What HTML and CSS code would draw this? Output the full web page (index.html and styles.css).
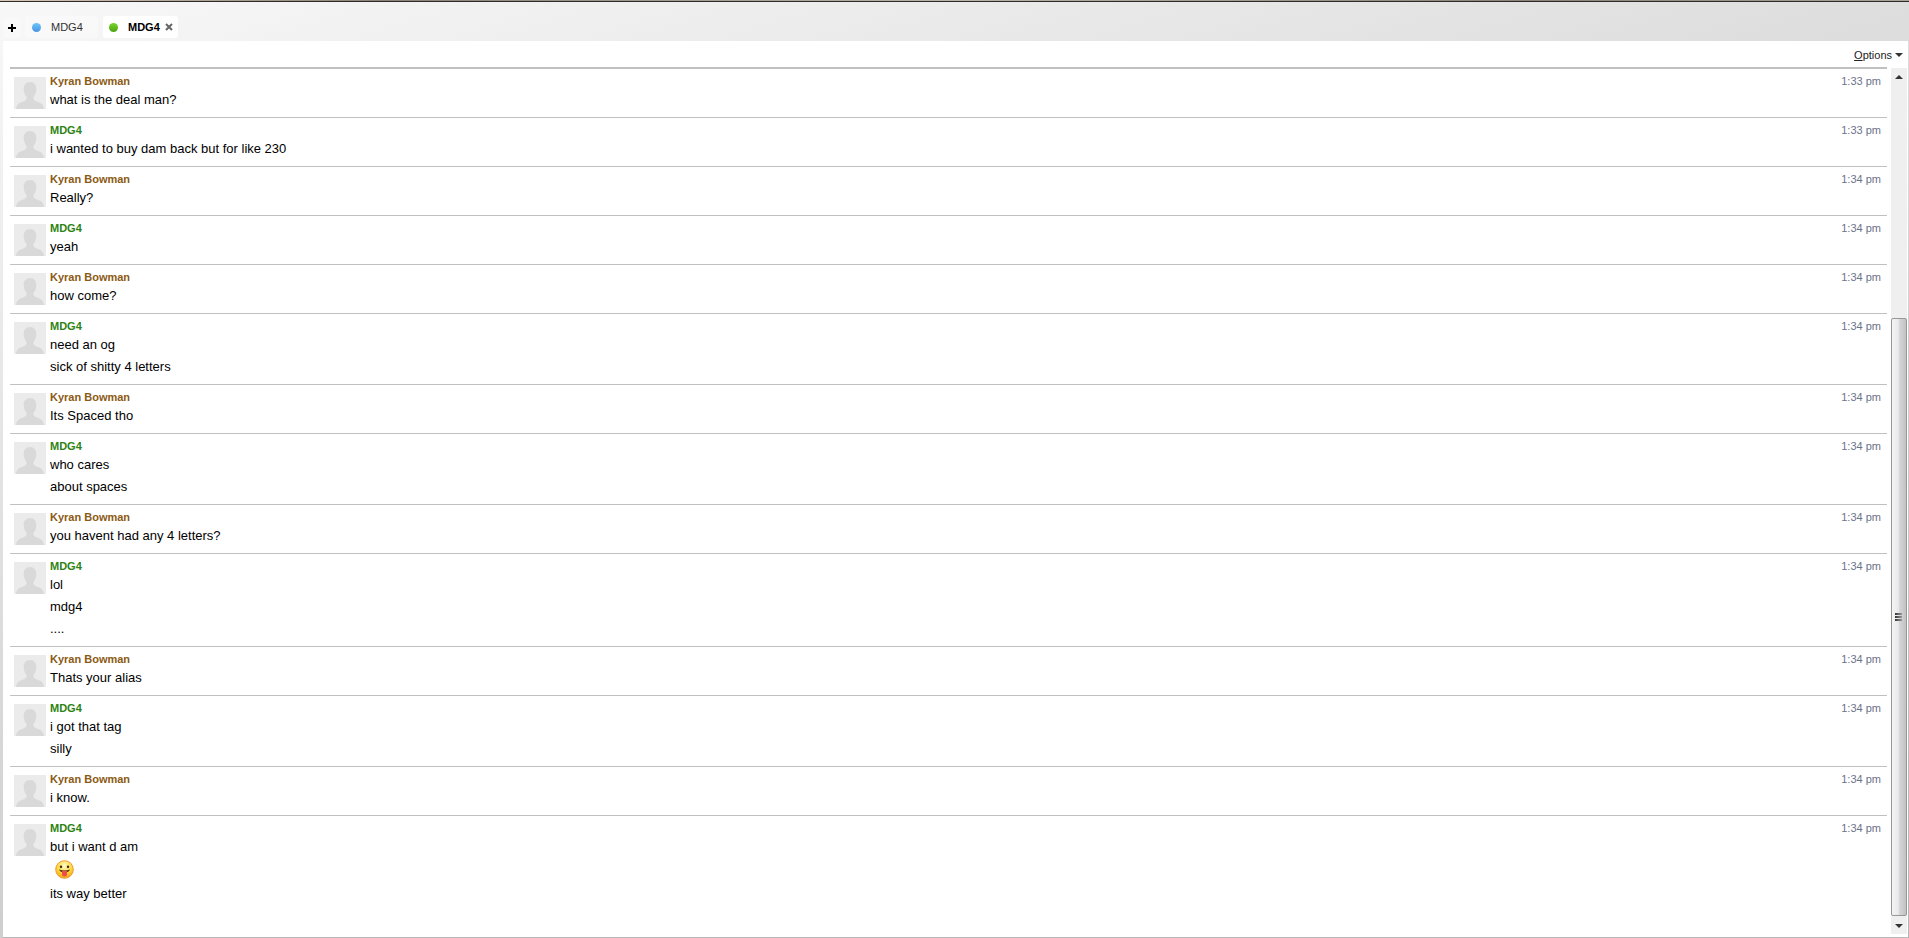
FILE: index.html
```html
<!DOCTYPE html>
<html lang="en">
<head>
    <meta charset="UTF-8">
    <meta name="viewport" content="width=device-width, initial-scale=1.0">
    <title>Chat - MDG4</title>
    <link rel="stylesheet" href="styles.css">
</head>
<body>
    <!-- shared shapes -->
    <svg class="defs" width="0" height="0" aria-hidden="true">
        <symbol id="avatar" viewBox="0 0 32 32">
            <rect width="32" height="32" fill="#ebebeb"/>
            <path d="M16 5c4.200 0 6.600 3.200 6.300 7.500-.2 3.200-1.300 5.700-2.800 7.200v1.800c0 1.600 2 2.600 4.500 3.500 4 1.400 5.500 3 6 7H2c.5-4 2-5.600 6-7 2.500-.9 4.500-1.900 4.500-3.500v-1.800c-1.500-1.500-2.600-4-2.800-7.200C9.400 8.200 11.800 5 16 5z" fill="#d9d9d9"/>
        </symbol>
    </svg>

    <div class="window">
        <div class="edge"></div>
        <header class="tabs">
            <button class="tab-add" type="button" aria-label="New chat">
                <svg width="8" height="8" viewBox="0 0 8 8"><path d="M3 0h2v3h3v2H5v3H3V5H0V3h3z"/></svg>
            </button>
            <button class="tab" type="button"><span class="dot blue"></span>MDG4</button>
            <div class="tab active">
                <button class="tab-name" type="button"><span class="dot green"></span>MDG4</button>
                <button class="tab-close" type="button" aria-label="Close">
                    <svg width="8" height="8" viewBox="0 0 8 8"><path d="M1 1l6 6M7 1L1 7" stroke="#666" stroke-width="2"/></svg>
                </button>
            </div>
        </header>

        <main class="panel">
            <div class="toolbar">
                <button class="options" type="button"><span><u>O</u>ptions</span><span class="caret down"></span></button>
            </div>

            <div class="chat">
                <div class="messages" id="messages"></div>
                <div class="scrollbar" aria-hidden="true">
                    <div class="arrow"><span class="caret up"></span></div>
                    <div class="track">
                        <div class="thumb"><i></i><i></i><i></i></div>
                    </div>
                    <div class="arrow"><span class="caret down"></span></div>
                </div>
            </div>
        </main>
    </div>

    <script src="script.js"></script>
</body>
</html>
```
FILE: styles.css
```css
* {
    box-sizing: border-box;
}
body {
    margin: 0;
    font-family: Arial, "Liberation Sans", sans-serif;
    font-size: 13px;
    color: #000;
}
button {
    border: none;
    background: none;
    padding: 0;
    font: inherit;
    color: inherit;
    cursor: pointer;
}
.defs {
    display: block;
}
.window {
    display: flex;
    flex-direction: column;
    min-height: 100vh;
    padding: 0 1px 0 3px;
    background: linear-gradient(163deg, #f8f8f8, #b4b4b4);
}
.edge {
    height: 2px;
    margin: 0 -1px 0 -3px;
    background: linear-gradient(90deg, #d8c8b8, #8a8478 20%, #b8b4a8 50%, #8a8478 80%, #a8a498);
    border-bottom: 1px solid #2f2b28;
}

/* tabs */
.tabs {
    display: flex;
    align-items: flex-end;
    height: 39px;
    padding-bottom: 3px;
    font-size: 11px;
}
.tab-add {
    display: flex;
    align-items: center;
    justify-content: center;
    width: 18px;
    height: 20px;
    border-radius: 3px;
    background: rgba(255, 255, 255, 0.3);
}
.tab {
    display: flex;
    align-items: center;
    height: 22px;
    width: 73px;
    margin-left: 4px;
    padding-left: 7px;
    border-radius: 3px;
    background: rgba(255, 255, 255, 0.3);
    color: #333;
}
.tab.active {
    width: 75px;
    margin-left: 5px;
    padding-left: 6px;
    background: #fff;
    color: #000;
    font-weight: bold;
}
.tab-name {
    display: flex;
    align-items: center;
}
.tab-close {
    display: flex;
    margin-left: 5px;
}
.dot {
    width: 9px;
    height: 9px;
    margin-right: 10px;
    border-radius: 50%;
}
.blue {
    background: linear-gradient(#6cc4f8, #4a94e4);
}
.green {
    background: linear-gradient(#78d42c, #4ea314);
}

/* panel */
.panel {
    flex: 1;
    display: flex;
    flex-direction: column;
    background: #fff;
    border-bottom: 1px solid #b8b8b8;
}
.toolbar {
    display: flex;
    justify-content: flex-end;
    height: 26px;
    padding: 2px 5px 0;
    font-size: 11px;
}
.options {
    display: flex;
    align-items: center;
    gap: 3px;
    color: #222;
}
.caret {
    border: 4px solid transparent;
}
.caret.down {
    border-top-color: #333;
    border-bottom: none;
}
.caret.up {
    border-bottom-color: #333;
    border-top: none;
}
.chat {
    flex: 1;
    display: flex;
    gap: 4px;
    padding: 0 1px 3px 7px;
}
.messages {
    flex: 1;
    border-top: 2px solid #c0c0c0;
}

/* message */
.message {
    display: flex;
    gap: 4px;
    padding: 8px 6px 6px 4px;
    border-bottom: 1px solid #c0c0c0;
}
.message:last-child {
    border-bottom: none;
}
.avatar {
    width: 32px;
    height: 32px;
}
.body {
    flex: 1;
    margin-top: -3px;
}
.name {
    margin-bottom: 1px;
    font-size: 11px;
    line-height: 14px;
    font-weight: bold;
}
.kyran .name {
    color: #8b5a14;
}
.mdg4 .name {
    color: #2e8314;
}
.body p {
    margin: 0;
    line-height: 22px;
}
.smiley {
    display: block;
    margin: 2px 0 4px 5px;
}
time {
    margin-top: -3px;
    font-size: 11px;
    line-height: 14px;
    color: #6b7289;
}

/* scrollbar */
.scrollbar {
    display: flex;
    flex-direction: column;
    width: 16px;
    margin-top: 1px;
    background: #efefef;
}
.arrow {
    display: flex;
    align-items: center;
    justify-content: center;
    height: 17px;
}
.track {
    flex: 1;
    display: flex;
    align-items: flex-end;
    padding-bottom: 1px;
}
.thumb {
    display: flex;
    flex-direction: column;
    align-items: flex-start;
    justify-content: center;
    gap: 1px;
    width: 100%;
    height: 72%;
    padding-left: 3px;
    border: 1px solid #979797;
    border-radius: 2px;
    background: linear-gradient(90deg, #f5f5f5, #e9e9eb 45%, #d4d4d6 55%, #c2c2c6);
}
.thumb i {
    width: 7px;
    height: 2px;
    background: linear-gradient(90deg, #333, #999);
}
```
FILE: script.js
```javascript
const people = {
    kyran: 'Kyran Bowman',
    mdg4: 'MDG4'
};

const smiley = `<svg class="smiley" width="19" height="19" viewBox="0 0 19 19" role="img" aria-label="Tongue out">
    <defs><radialGradient id="face" cx=".5" cy=".3" r=".7"><stop offset="0" stop-color="#fffbd0"/><stop offset=".6" stop-color="#fdd835"/><stop offset="1" stop-color="#f5a010"/></radialGradient></defs>
    <circle cx="9.5" cy="9.5" r="8.8" fill="url(#face)" stroke="#ee9a3c"/>
    <ellipse cx="6" cy="6.800" rx="1.200" ry="1.400" fill="#402a10"/>
    <ellipse cx="13" cy="6.800" rx="1.200" ry="1.400" fill="#402a10"/>
    <path d="M4 9.500q5.500 2 11 0-1 3-5.500 3T4 9.500z" fill="#5a2a10"/>
    <path d="M7 11h5v3a2.500 2.500 0 0 1-5 0z" fill="#ee4a4a"/>
</svg>`;

const messages = [
    { from: 'kyran', time: '1:33 pm', lines: ['what is the deal man?'] },
    { from: 'mdg4', time: '1:33 pm', lines: ['i wanted to buy dam back but for like 230'] },
    { from: 'kyran', time: '1:34 pm', lines: ['Really?'] },
    { from: 'mdg4', time: '1:34 pm', lines: ['yeah'] },
    { from: 'kyran', time: '1:34 pm', lines: ['how come?'] },
    { from: 'mdg4', time: '1:34 pm', lines: ['need an og', 'sick of shitty 4 letters'] },
    { from: 'kyran', time: '1:34 pm', lines: ['Its Spaced tho'] },
    { from: 'mdg4', time: '1:34 pm', lines: ['who cares', 'about spaces'] },
    { from: 'kyran', time: '1:34 pm', lines: ['you havent had any 4 letters?'] },
    { from: 'mdg4', time: '1:34 pm', lines: ['lol', 'mdg4', '....'] },
    { from: 'kyran', time: '1:34 pm', lines: ['Thats your alias'] },
    { from: 'mdg4', time: '1:34 pm', lines: ['i got that tag', 'silly'] },
    { from: 'kyran', time: '1:34 pm', lines: ['i know.'] },
    { from: 'mdg4', time: '1:34 pm', lines: ['but i want d am', ':P', 'its way better'] }
];

document.getElementById('messages').innerHTML = messages.map(msg => `
    <article class="message ${msg.from}">
        <svg class="avatar" aria-hidden="true"><use href="#avatar"/></svg>
        <div class="body">
            <div class="name">${people[msg.from]}</div>
            ${msg.lines.map(line => line === ':P' ? smiley : `<p>${line}</p>`).join('')}
        </div>
        <time>${msg.time}</time>
    </article>`).join('');
```
